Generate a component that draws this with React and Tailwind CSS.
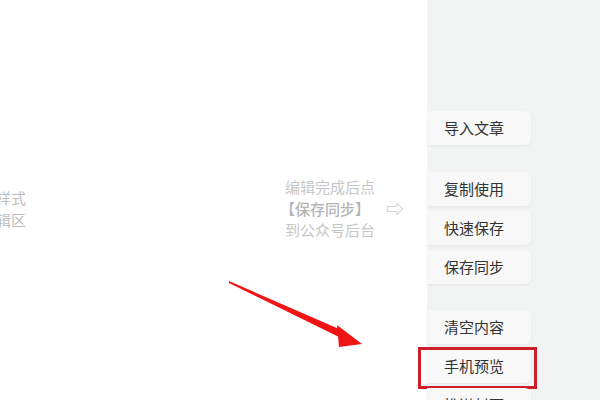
import React from 'react'

const font = { fontFamily: '"Noto Sans CJK SC", "Noto Sans", sans-serif' }

function SideButton({ label, highlight }) {
  return (
    <div className="relative h-[34px] w-[104px] shrink-0 flex items-center pl-[17px] bg-[#f8f8f8] rounded-r-md shadow-[0_1px_3px_rgba(0,0,0,0.06)] text-[15px] text-[#333333]">
      {label}
      {highlight && (
        <div className="absolute -left-[9px] -right-[6px] -top-[2px] -bottom-[6px] border-[3px] border-[#cf1f2a]" />
      )}
    </div>
  )
}

export default function App() {
  return (
    <div className="w-[600px] h-[400px] flex overflow-hidden bg-white" style={font}>
      {/* Editor area */}
      <div className="relative w-[427px] h-full bg-white overflow-hidden">
        <div className="flex items-start pt-[176px]">
          <div className="w-[40px] mt-[11px] text-[15px] leading-[22px] text-[#bdbdbd]">
            <div className="-ml-[4px]">样式</div>
            <div className="-ml-[4px]">辑区</div>
          </div>
          <div className="ml-[245px] text-[15px] leading-[21.5px] text-[#c6c6c6]">
            <div>编辑完成后点</div>
            <div className="-ml-[5px] font-medium text-[#b5b5b5]">【保存同步】</div>
            <div>到公众号后台</div>
          </div>
          <div className="ml-[11px] mt-[23px] text-[18px] leading-none text-[#c9c9c9]">⇨</div>
        </div>

        {/* Red annotation arrow */}
        <svg className="absolute left-0 top-0" width="427" height="400" viewBox="0 0 427 400">
          <polygon points="229,281 346,332 343,339 229,283" fill="#f01515" />
          <polygon points="337,325 362,344 339,347" fill="#f01515" />
        </svg>
      </div>

      {/* Side toolbar */}
      <div className="flex-1 h-full bg-[#f2f3f3] flex flex-col pt-[111px]">
        <SideButton label="导入文章" />
        <div className="h-[27px] shrink-0" />
        <div className="flex flex-col gap-[5px]">
          <SideButton label="复制使用" />
          <SideButton label="快速保存" />
          <SideButton label="保存同步" />
        </div>
        <div className="h-[26px] shrink-0" />
        <div className="flex flex-col gap-[5px]">
          <SideButton label="清空内容" />
          <SideButton label="手机预览" highlight />
          <SideButton label="推送封面" />
        </div>
      </div>
    </div>
  )
}
